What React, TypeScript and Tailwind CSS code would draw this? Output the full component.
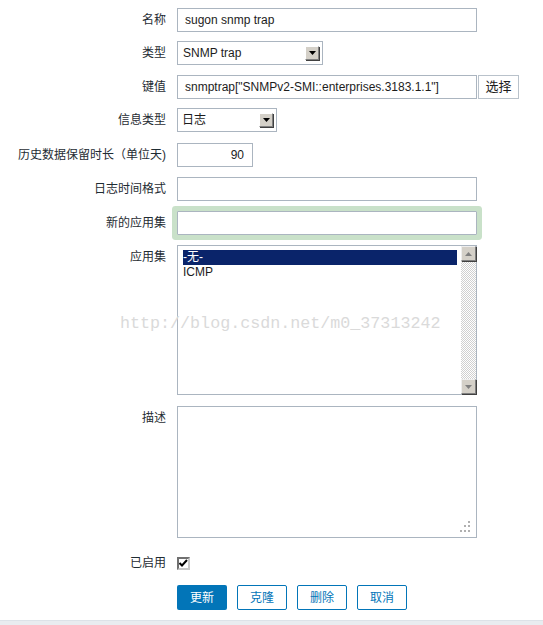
import React from "react";

const FONT = "font-['Liberation_Sans','Noto_Sans_CJK_SC',sans-serif]";

function Label({ children, top = false }: { children: React.ReactNode; top?: boolean }) {
  return (
    <div
      className={
        top
          ? "w-[166px] shrink-0 text-right pt-[4px] leading-[16px]"
          : "w-[166px] shrink-0 text-right leading-[16px]"
      }
    >
      {children}
    </div>
  );
}

function ArrowBtn() {
  return (
    <div className="w-[14px] h-[14px] mr-[3px] bg-[#d4d0c8] border border-t-white border-l-white border-r-[#808080] border-b-[#808080] shadow-[1px_1px_0_#404040] flex items-center justify-center">
      <svg width="7" height="4" viewBox="0 0 7 4">
        <polygon points="0,0 7,0 3.5,4" fill="#000" />
      </svg>
    </div>
  );
}

function ScrollBtn({ up }: { up?: boolean }) {
  return (
    <div className="w-[15px] h-[15px] bg-[#d4d0c8] border border-t-[#eeeeee] border-l-[#eeeeee] border-r-[#808080] border-b-[#808080] shadow-[1px_1px_0_#404040] flex items-center justify-center">
      <svg width="7" height="4" viewBox="0 0 7 4">
        {up ? (
          <polygon points="0,4 7,4 3.5,0" fill="#808080" />
        ) : (
          <polygon points="0,0 7,0 3.5,4" fill="#808080" />
        )}
      </svg>
    </div>
  );
}

export default function App() {
  return (
    <div className={`relative w-[543px] h-[625px] bg-white flex flex-col text-[12px] text-[#1f2c33] ${FONT}`}>
      <div className="flex flex-col pt-[8px]">
        {/* 名称 */}
        <div className="flex items-center">
          <Label>名称</Label>
          <div className="ml-[11px] w-[300px] h-[24px] border border-[#abb5c0] bg-white flex items-center pl-[7px] text-[12px] text-[#1c1c1c]">
            sugon snmp trap
          </div>
        </div>

        {/* 类型 */}
        <div className="flex items-center mt-[9px]">
          <Label>类型</Label>
          <div className="ml-[11px] w-[146px] h-[24px] border border-[#abb5c0] bg-white flex items-center justify-between pl-[5px] text-[#1c1c1c]">
            <span>SNMP trap</span>
            <ArrowBtn />
          </div>
        </div>

        {/* 键值 */}
        <div className="flex items-center mt-[10px]">
          <Label>键值</Label>
          <div className="ml-[11px] w-[300px] h-[24px] border border-[#abb5c0] bg-white flex items-center pl-[7px] text-[#1c1c1c] whitespace-nowrap">
            snmptrap["SNMPv2-SMI::enterprises.3183.1.1"]
          </div>
          <div className="ml-[1px] w-[41px] h-[24px] border border-[#b9c2cb] bg-white flex items-center justify-center text-[13px] text-[#1c1c1c]">
            选择
          </div>
        </div>

        {/* 信息类型 */}
        <div className="flex items-center mt-[9px]">
          <Label>信息类型</Label>
          <div className="ml-[11px] w-[100px] h-[24px] border border-[#abb5c0] bg-white flex items-center justify-between pl-[4px] text-[#1c1c1c]">
            <span>日志</span>
            <ArrowBtn />
          </div>
        </div>

        {/* 历史数据保留时长 */}
        <div className="flex items-center mt-[11px]">
          <Label>历史数据保留时长（单位天)</Label>
          <div className="ml-[11px] w-[76px] h-[24px] border border-[#abb5c0] bg-white flex items-center justify-end pr-[8px] text-[#1c1c1c]">
            90
          </div>
        </div>

        {/* 日志时间格式 */}
        <div className="flex items-center mt-[10px]">
          <Label>日志时间格式</Label>
          <div className="ml-[11px] w-[300px] h-[24px] border border-[#abb5c0] bg-white" />
        </div>

        {/* 新的应用集 */}
        <div className="flex items-center mt-[10px]">
          <Label>新的应用集</Label>
          <div className="ml-[11px] w-[300px] h-[24px] border border-[#abb5c0] bg-white shadow-[0_0_0_5px_#c9e1c9] rounded-[1px]" />
        </div>

        {/* 应用集 */}
        <div className="flex items-start mt-[10px]">
          <Label top>应用集</Label>
          <div className="ml-[11px] w-[300px] h-[150px] border border-[#abb5c0] bg-white flex">
            <div className="flex-1 pl-[5px] pt-[4px] pr-[4px] flex flex-col">
              <div className="h-[15px] bg-[#0a246a] text-white leading-[15px]">-无-</div>
              <div className="h-[15px] leading-[15px] text-[#1c1c1c]">ICMP</div>
            </div>
            <div className="w-[15px] h-full flex flex-col bg-[image:repeating-conic-gradient(#d0d0d0_0_25%,#ffffff_0_50%)] bg-[length:2px_2px]">
              <ScrollBtn up />
              <div className="flex-1" />
              <ScrollBtn />
            </div>
          </div>
        </div>

        {/* 描述 */}
        <div className="flex items-start mt-[11px]">
          <Label top>描述</Label>
          <div className="ml-[11px] w-[300px] h-[132px] border border-[#abb5c0] bg-white flex items-end justify-end pr-[6px] pb-[5px]">
            <svg width="12" height="11" viewBox="0 0 12 11">
              <rect x="10" y="0" width="2" height="2" fill="#b0b0b0" />
              <rect x="6" y="4" width="2" height="2" fill="#b0b0b0" />
              <rect x="10" y="4" width="2" height="2" fill="#b0b0b0" />
              <rect x="2" y="9" width="2" height="2" fill="#b0b0b0" />
              <rect x="6" y="9" width="2" height="2" fill="#b0b0b0" />
              <rect x="10" y="9" width="2" height="2" fill="#b0b0b0" />
            </svg>
          </div>
        </div>

        {/* 已启用 */}
        <div className="flex items-center mt-[17px]">
          <Label>已启用</Label>
          <div className="ml-[11px] w-[13px] h-[13px] border-2 border-t-[#707070] border-l-[#707070] border-r-[#c8c8c8] border-b-[#c8c8c8] bg-white flex items-center justify-center">
            <svg width="9" height="9" viewBox="0 0 9 9">
              <path d="M0.5 4 L3 6.5 L8 1" stroke="#000" strokeWidth="2" fill="none" />
            </svg>
          </div>
        </div>

        {/* Buttons */}
        <div className="flex items-center mt-[14px] pl-[177px] gap-[10px]">
          <div className="w-[50px] h-[25px] rounded-[2px] bg-[#0275b8] text-white flex items-center justify-center">更新</div>
          <div className="w-[50px] h-[25px] rounded-[2px] border border-[#0275b8] text-[#0275b8] bg-white flex items-center justify-center">克隆</div>
          <div className="w-[50px] h-[25px] rounded-[2px] border border-[#0275b8] text-[#0275b8] bg-white flex items-center justify-center">删除</div>
          <div className="w-[50px] h-[25px] rounded-[2px] border border-[#0275b8] text-[#0275b8] bg-white flex items-center justify-center">取消</div>
        </div>
      </div>

      <div className="mt-auto h-[5px] bg-[#e9ecf0] border-t border-[#dde2e8]" />

      <div className="absolute left-[120px] top-[316px] text-[16.7px] leading-none text-[#dadada] whitespace-nowrap pointer-events-none font-['Liberation_Mono',monospace]">
        http://blog.csdn.net/m0_37313242
      </div>
    </div>
  );
}
